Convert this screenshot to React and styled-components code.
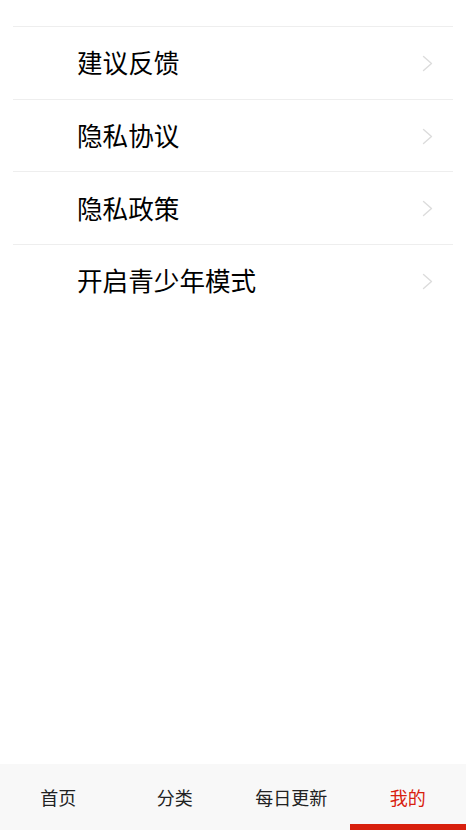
import React from "react";
import styled, { createGlobalStyle } from "styled-components";

const GlobalStyle = createGlobalStyle`
  html, body {
    margin: 0;
    padding: 0;
    background: #fff;
    font-family: "Noto Sans CJK SC", "Noto Sans", sans-serif;
  }
`;

const Page = styled.div`
  width: 466px;
  height: 830px;
  display: flex;
  flex-direction: column;
  overflow: hidden;
`;

const Content = styled.main`
  flex: 1;
  padding-top: 26px;
`;

const List = styled.ul`
  list-style: none;
  margin: 0 13px;
  padding: 0;
`;

const Row = styled.li`
  box-sizing: border-box;
  height: 72.7px;
  display: flex;
  align-items: center;
  justify-content: space-between;
  border-top: 1px solid #eeeeee;
  padding: 0 20px 2px 64px;
`;

const Label = styled.span`
  font-size: 25.6px;
  color: #000;
`;

const Chevron = styled.svg`
  width: 11px;
  height: 17px;
  margin-top: 3px;
  flex-shrink: 0;
`;

const TabBar = styled.nav`
  height: 66px;
  background: #f8f8f8;
  display: grid;
  grid-template-columns: repeat(4, 1fr);
`;

const Tab = styled.div`
  position: relative;
  display: flex;
  align-items: center;
  justify-content: center;
  font-size: 18px;
  color: ${(p) => (p.$active ? "#d8200e" : "#222")};

  &::after {
    content: "";
    display: ${(p) => (p.$active ? "block" : "none")};
    position: absolute;
    left: 0;
    right: 0;
    bottom: 0;
    height: 6px;
    background: #d8200e;
  }
`;

const items = ["建议反馈", "隐私协议", "隐私政策", "开启青少年模式"];
const tabs = ["首页", "分类", "每日更新", "我的"];

export default function App() {
  return (
    <Page>
      <GlobalStyle />
      <Content>
        <List>
          {items.map((t) => (
            <Row key={t}>
              <Label>{t}</Label>
              <Chevron viewBox="0 0 11 17" fill="none">
                <path
                  d="M1.5 1.5 L9.5 8.5 L1.5 15.5"
                  stroke="#dcdcdc"
                  strokeWidth="1.4"
                  strokeLinecap="round"
                  strokeLinejoin="round"
                />
              </Chevron>
            </Row>
          ))}
        </List>
      </Content>
      <TabBar>
        {tabs.map((t, i) => (
          <Tab key={t} $active={i === 3}>
            {t}
          </Tab>
        ))}
      </TabBar>
    </Page>
  );
}
